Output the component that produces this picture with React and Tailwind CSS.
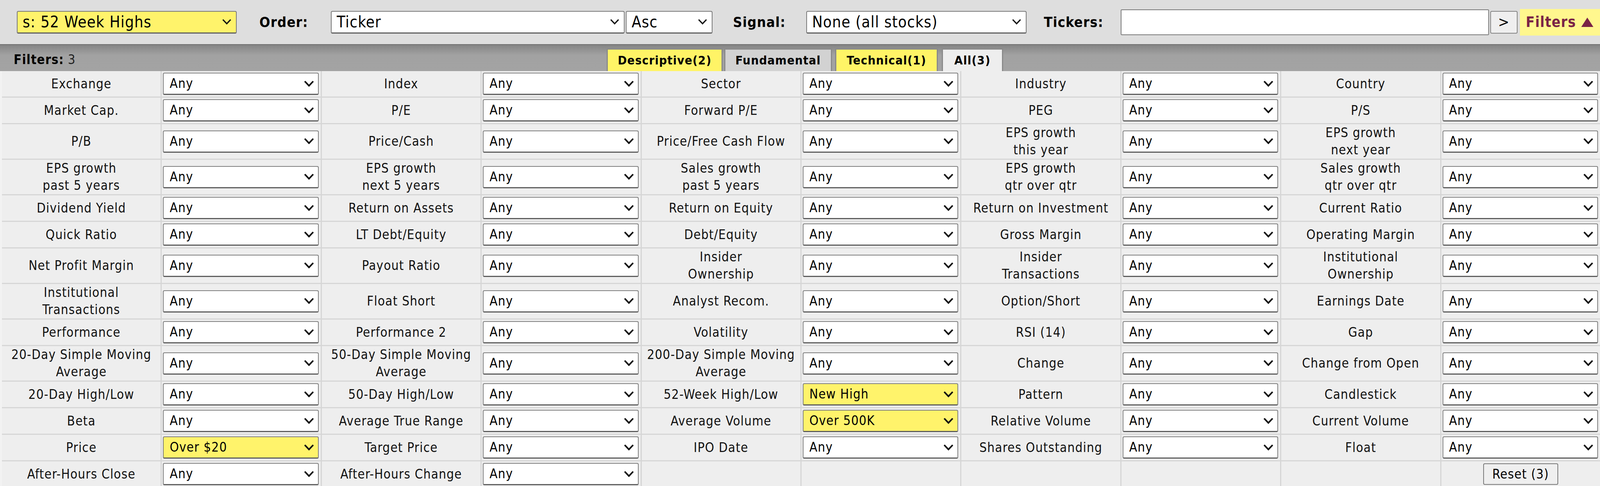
import React from 'react'

const rows = [
  [['Exchange'], ['Index'], ['Sector'], ['Industry'], ['Country']],
  [['Market Cap.'], ['P/E'], ['Forward P/E'], ['PEG'], ['P/S']],
  [['P/B'], ['Price/Cash'], ['Price/Free Cash Flow'], ['EPS growth\nthis year'], ['EPS growth\nnext year']],
  [['EPS growth\npast 5 years'], ['EPS growth\nnext 5 years'], ['Sales growth\npast 5 years'], ['EPS growth\nqtr over qtr'], ['Sales growth\nqtr over qtr']],
  [['Dividend Yield'], ['Return on Assets'], ['Return on Equity'], ['Return on Investment'], ['Current Ratio']],
  [['Quick Ratio'], ['LT Debt/Equity'], ['Debt/Equity'], ['Gross Margin'], ['Operating Margin']],
  [['Net Profit Margin'], ['Payout Ratio'], ['Insider\nOwnership'], ['Insider\nTransactions'], ['Institutional\nOwnership']],
  [['Institutional\nTransactions'], ['Float Short'], ['Analyst Recom.'], ['Option/Short'], ['Earnings Date']],
  [['Performance'], ['Performance 2'], ['Volatility'], ['RSI (14)'], ['Gap']],
  [['20-Day Simple Moving\nAverage'], ['50-Day Simple Moving\nAverage'], ['200-Day Simple Moving\nAverage'], ['Change'], ['Change from Open']],
  [['20-Day High/Low'], ['50-Day High/Low'], ['52-Week High/Low', 'New High', true], ['Pattern'], ['Candlestick']],
  [['Beta'], ['Average True Range'], ['Average Volume', 'Over 500K', true], ['Relative Volume'], ['Current Volume']],
  [['Price', 'Over $20', true], ['Target Price'], ['IPO Date'], ['Shares Outstanding'], ['Float']],
  [['After-Hours Close'], ['After-Hours Change'], null, null, 'reset'],
]

function Chevron({ small }) {
  return (
    <svg width={small ? 23 : 24} height={small ? 14 : 15} viewBox="0 0 24 15" className="shrink-0">
      <path d="M2.5 2.5 L12 12.5 L21.5 2.5" fill="none" stroke="#111" strokeWidth={small ? 3.5 : 4} strokeLinecap="square" />
    </svg>
  )
}

function FakeSelect({ value = 'Any', hl }) {
  return (
    <div className={`flex h-[57px] w-full items-center justify-between rounded-[4px] border-2 border-[#808080] border-b-[3px] border-b-[#5e5e5e] pl-[15px] pr-[11px] text-[33px] text-black ${hl ? 'bg-[#fff36b]' : 'bg-white'}`}>
      <span>{value}</span>
      <Chevron />
    </div>
  )
}

function TopSelect({ value, width, hl }) {
  return (
    <div className={`flex h-[58px] shrink-0 items-center justify-between rounded-[4px] border-2 border-[#7a7a7a] border-b-[3px] border-b-[#616161] pl-[13px] pr-[12px] text-[40px] text-black ${width} ${hl ? 'bg-[#fff36b]' : 'bg-white'}`}>
      <span className="whitespace-nowrap">{value}</span>
      <Chevron small />
    </div>
  )
}

function TopLabel({ children, width }) {
  return <div className={`shrink-0 text-center text-[36px] font-bold text-black ${width}`}>{children}</div>
}

export default function App() {
  const tabs = [
    { label: 'Descriptive(2)', cls: 'w-[297px] bg-[#fff466]' },
    { label: 'Fundamental', cls: 'ml-[4px] w-[276px] bg-[#d2d2d2]' },
    { label: 'Technical(1)', cls: 'ml-[8px] w-[263px] bg-[#fff466]' },
    { label: 'All(3)', cls: 'ml-[10px] w-[157px] bg-[#eeeeee]' },
  ]

  return (
    <div className="w-full overflow-hidden bg-[#f2f2f2] font-['DejaVu_Sans_Condensed','DejaVu_Sans',Verdana,sans-serif] tracking-[1.2px] text-black">
      {/* top toolbar */}
      <div className="flex h-[113px] items-center bg-[#dedede] pl-[43px]">
        <TopSelect value="s: 52 Week Highs" width="w-[563px]" hl />
        <TopLabel width="w-[241px]">Order:</TopLabel>
        <TopSelect value="Ticker" width="w-[752px]" />
        <div className="ml-[3px]"><TopSelect value="Asc" width="w-[222px]" /></div>
        <TopLabel width="w-[240px]">Signal:</TopLabel>
        <TopSelect value="None (all stocks)" width="w-[564px]" />
        <TopLabel width="w-[241px]">Tickers:</TopLabel>
        <div className="h-[66px] min-w-0 flex-1 rounded-[3px] border-2 border-[#7a7a7a] bg-white" />
        <div className="ml-[3px] flex h-[58px] w-[70px] shrink-0 items-center justify-center rounded-[4px] border-2 border-[#858585] bg-[#efefef] text-[38px]">&gt;</div>
        <div className="ml-[6px] flex h-[68px] w-[205px] shrink-0 items-center bg-[#fff78e] pl-[15px] text-[37px] font-bold text-[#7a2346]">
          <span>Filters</span>
          <svg width="33" height="26" viewBox="0 0 33 26" className="ml-[12px]">
            <polygon points="16.5,1 32,25 1,25" fill="#7a2346" />
          </svg>
        </div>
      </div>

      {/* filters tab bar */}
      <div className="flex h-[69px] items-end border-t-2 border-[#6e6e6e] bg-[linear-gradient(to_bottom,#848484_0px,#a2a2a2_26px,#a3a3a3_100%)]">
        <div className="flex h-full w-[1553px] shrink-0 pl-[35px] pt-[18px] text-[33px] leading-[40px]">
          <span className="font-bold">Filters:</span>
          <span className="ml-[10px] text-[#222]">3</span>
        </div>
        {tabs.map((t) => (
          <div key={t.label} className={`flex h-[58px] shrink-0 items-center justify-center border-[3px] border-b-0 border-[#8a8a8a] text-[31px] font-bold ${t.cls}`}>
            {t.label}
          </div>
        ))}
      </div>

      {/* filter grid */}
      <div className="pl-[5px]">
        <div className="grid grid-cols-10 gap-[3px] bg-[#d6d6d6]">
          {rows.map((row, ri) =>
            row.map((cell, ci) => {
              if (cell === null) {
                return (
                  <React.Fragment key={`${ri}-${ci}`}>
                    <div className="bg-[#eeeeee]" />
                    <div className="bg-[#eeeeee]" />
                  </React.Fragment>
                )
              }
              if (cell === 'reset') {
                return (
                  <React.Fragment key={`${ri}-${ci}`}>
                    <div className="bg-[#eeeeee]" />
                    <div className="flex items-center justify-center bg-[#eeeeee] py-[4px]">
                      <div className="flex h-[55px] w-[192px] items-center justify-center rounded-[4px] border-2 border-[#7a7a7a] bg-[#efefef] text-[33px]">Reset (3)</div>
                    </div>
                  </React.Fragment>
                )
              }
              const [label, value, hl] = cell
              return (
                <React.Fragment key={`${ri}-${ci}`}>
                  <div className="flex flex-col items-center justify-center bg-[#eeeeee] text-center text-[33px] leading-[44px] text-[#111]">
                    {label.split('\n').map((line) => (
                      <span key={line} className="whitespace-nowrap">{line}</span>
                    ))}
                  </div>
                  <div className="flex items-center bg-[#eeeeee] py-[4px] pl-[3px] pr-[5px]">
                    <FakeSelect value={value} hl={hl} />
                  </div>
                </React.Fragment>
              )
            })
          )}
        </div>
      </div>
    </div>
  )
}
